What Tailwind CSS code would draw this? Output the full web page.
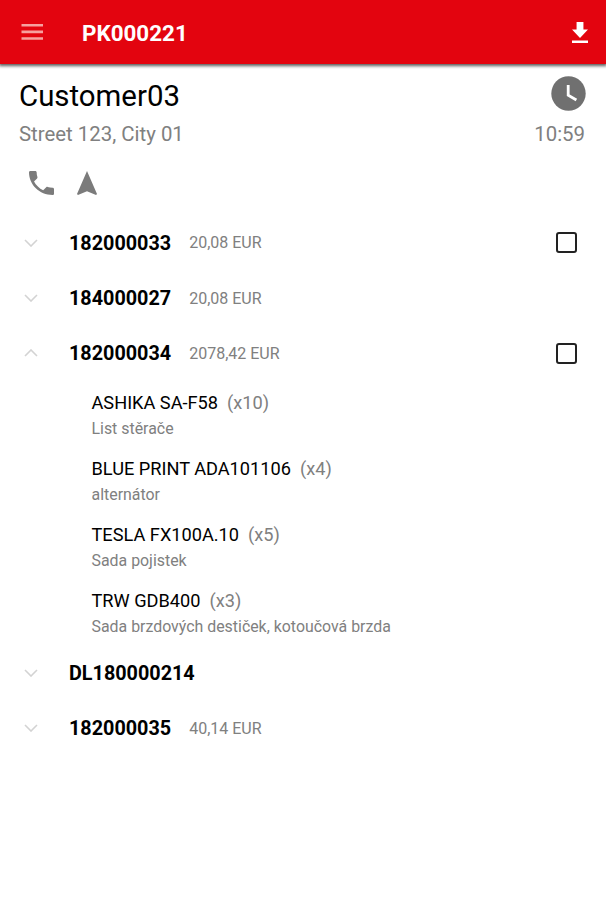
<!DOCTYPE html>
<html lang="cs">
<head>
<meta charset="utf-8">
<title>PK000221</title>
<script src="https://cdn.jsdelivr.net/npm/@tailwindcss/browser@4"></script>
</head>
<body class="w-[606px] h-[900px] overflow-hidden bg-white font-['Roboto',sans-serif] text-[#808080]">
<header class="h-16 bg-[#e3040f] flex items-center pl-[21px] pr-[18px] text-white shadow-[0_1px_3px_1px_rgba(0,0,0,0.65)]">
  <svg class="w-[22px] h-4 shrink-0" viewBox="0 0 22 16" fill="#f7a09f"><path d="M.5 0h21.5v2.5H.5zM.5 6.6h21.5v2.6H.5zM.5 13.2h21.5v2.5H.5z"/></svg>
  <h1 class="ml-[39px] text-[22.4px] leading-8 font-bold whitespace-nowrap grow pt-[2px]">PK000221</h1>
  <svg class="w-4 h-[21px] shrink-0" viewBox="5 3 14 17" preserveAspectRatio="none" fill="#fff"><path d="M19 9h-4V3H9v6H5l7 7 7-7zM5 18v2h14v-2H5z"/></svg>
</header>
<section class="pt-3 pl-[19px] pr-[21px]">
  <div class="flex items-center justify-between h-10">
    <h2 class="text-[29.4px] leading-10 text-black">Customer03</h2>
    <svg class="w-[35px] h-[35px] mt-[-5px] mr-[-1px]" viewBox="0 0 35 35"><circle cx="17.5" cy="17.5" r="17.2" fill="#707070"/><path d="M17.2 9v10.2l8.2 4.8" fill="none" stroke="#fff" stroke-width="2.8"/></svg>
  </div>
  <div class="flex justify-between h-9 items-center text-[20.4px]"><p>Street 123, City 01</p><p>10:59</p></div>
  <div class="flex h-[63px] items-center pl-[10px] pb-[2px] gap-[23px]">
    <svg class="w-[25px] h-6" viewBox="3 3 18 18" preserveAspectRatio="none" fill="#7b7b7b"><path d="M6.62 10.79c1.44 2.83 3.76 5.14 6.59 6.59l2.2-2.2c.27-.27.67-.36 1.02-.24 1.12.37 2.33.57 3.57.57.55 0 1 .45 1 1V20c0 .55-.45 1-1 1-9.39 0-17-7.61-17-17 0-.55.45-1 1-1h3.5c.55 0 1 .45 1 1 0 1.25.2 2.45.57 3.57.11.35.03.74-.25 1.02l-2.2 2.2z"/></svg>
    <svg class="w-5 h-6" viewBox="4.5 2 15 19" preserveAspectRatio="none" fill="#7b7b7b"><path d="M12 2L4.5 20.29l.71.71L12 18l6.79 3 .71-.71z"/></svg>
  </div>
</section>
<main class="pl-6 pr-[29.5px] whitespace-nowrap">
  <div class="flex items-center h-[55.4px]">
    <svg class="w-[14px] h-2 mr-[31px]" viewBox="0 0 14 8" fill="none" stroke="#d3d3d3" stroke-width="1.6"><path d="M1 1l6 6 6-6"/></svg>
    <span class="text-[19.8px] font-bold text-black mr-[18px] pt-[1.5px]">182000033</span><span class="text-base grow pt-[1.5px]">20,08 EUR</span>
    <span class="w-[21px] h-[21px] border-2 border-[#222] rounded-[3px]"></span>
  </div>
  <div class="flex items-center h-[55.4px]">
    <svg class="w-[14px] h-2 mr-[31px]" viewBox="0 0 14 8" fill="none" stroke="#d3d3d3" stroke-width="1.6"><path d="M1 1l6 6 6-6"/></svg>
    <span class="text-[19.8px] font-bold text-black mr-[18px] pt-[1.5px]">184000027</span><span class="text-base grow pt-[1.5px]">20,08 EUR</span>
  </div>
  <div class="flex items-center h-[55.4px]">
    <svg class="w-[14px] h-2 mr-[31px]" viewBox="0 0 14 8" fill="none" stroke="#d3d3d3" stroke-width="1.6"><path d="M1 7l6-6 6 6"/></svg>
    <span class="text-[19.8px] font-bold text-black mr-[18px] pt-[1.5px]">182000034</span><span class="text-base grow pt-[1.5px]">2078,42 EUR</span>
    <span class="w-[21px] h-[21px] border-2 border-[#222] rounded-[3px]"></span>
  </div>
  <ul class="pl-[67.5px] pt-2 h-[264px]">
    <li class="h-[66px]"><p class="text-[18.2px] leading-7"><span class="text-black mr-[9px]">ASHIKA SA-F58</span>(x10)</p><p class="text-[15.9px] leading-6">List stěrače</p></li>
    <li class="h-[66px]"><p class="text-[18.2px] leading-7"><span class="text-black mr-[9px]">BLUE PRINT ADA101106</span>(x4)</p><p class="text-[15.9px] leading-6">alternátor</p></li>
    <li class="h-[66px]"><p class="text-[18.2px] leading-7"><span class="text-black mr-[9px]">TESLA FX100A.10</span>(x5)</p><p class="text-[15.9px] leading-6">Sada pojistek</p></li>
    <li class="h-[66px]"><p class="text-[18.2px] leading-7"><span class="text-black mr-[9px]">TRW GDB400</span>(x3)</p><p class="text-[15.9px] leading-6">Sada brzdových destiček, kotoučová brzda</p></li>
  </ul>
  <div class="flex items-center h-[55.4px]">
    <svg class="w-[14px] h-2 mr-[31px]" viewBox="0 0 14 8" fill="none" stroke="#d3d3d3" stroke-width="1.6"><path d="M1 1l6 6 6-6"/></svg>
    <span class="text-[19.8px] font-bold text-black pt-[1.5px]">DL180000214</span>
  </div>
  <div class="flex items-center h-[55.4px]">
    <svg class="w-[14px] h-2 mr-[31px]" viewBox="0 0 14 8" fill="none" stroke="#d3d3d3" stroke-width="1.6"><path d="M1 1l6 6 6-6"/></svg>
    <span class="text-[19.8px] font-bold text-black mr-[18px] pt-[1.5px]">182000035</span><span class="text-base grow pt-[1.5px]">40,14 EUR</span>
  </div>
</main>
</body>
</html>
